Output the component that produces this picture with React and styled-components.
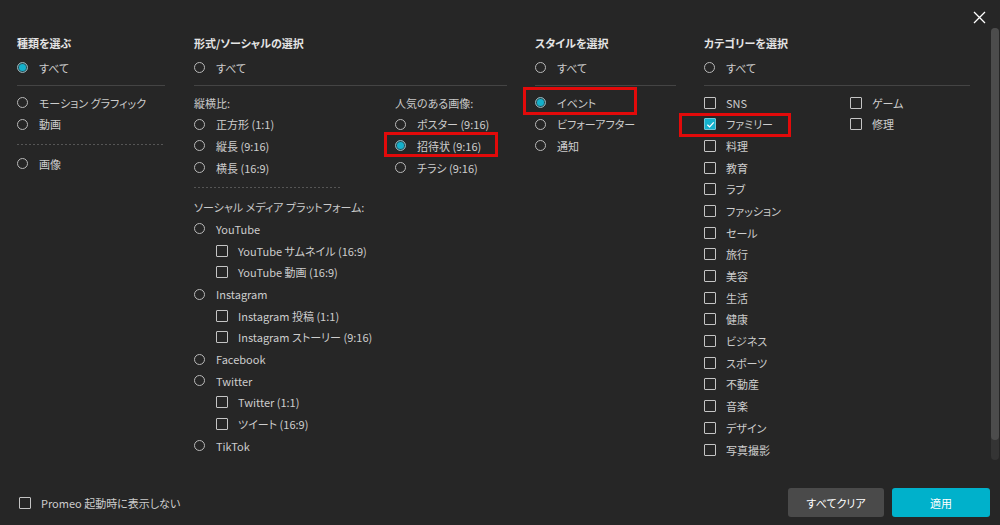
import React from "react"
import styled, { createGlobalStyle, css } from "styled-components"

const GlobalStyle = createGlobalStyle`
  html, body {
    margin: 0;
    padding: 0;
    background: #262626;
  }
  body {
    font-family: "Noto Sans CJK JP", "Noto Sans", sans-serif;
    font-feature-settings: "palt";
  }
`

const CYAN = "#14b1cc"

const mediaRows = [
  { kind: "label", text: "ソーシャル メディア プラットフォーム:" },
  { kind: "radio", text: "YouTube" },
  { kind: "check", text: "YouTube サムネイル (16:9)", indent: true },
  { kind: "check", text: "YouTube 動画 (16:9)", indent: true },
  { kind: "radio", text: "Instagram" },
  { kind: "check", text: "Instagram 投稿 (1:1)", indent: true },
  { kind: "check", text: "Instagram ストーリー (9:16)", indent: true },
  { kind: "radio", text: "Facebook" },
  { kind: "radio", text: "Twitter" },
  { kind: "check", text: "Twitter (1:1)", indent: true },
  { kind: "check", text: "ツイート (16:9)", indent: true },
  { kind: "radio", text: "TikTok" },
]

const categories = [
  "SNS", "ファミリー", "料理", "教育", "ラブ", "ファッション", "セール", "旅行",
  "美容", "生活", "健康", "ビジネス", "スポーツ", "不動産", "音楽", "デザイン", "写真撮影",
]

const Item = ({ kind, text, on, indent, mark }) => (
  <Row $indent={indent} $mark={mark}>
    {kind === "radio" && <Radio $on={on} />}
    {kind === "check" && (
      <Box $on={on}>
        {on && (
          <svg width="9" height="9" viewBox="0 0 10 10">
            <path d="M1.5 5.2 L4 7.6 L8.6 2.6" fill="none" stroke="#fff" strokeWidth="1.4" />
          </svg>
        )}
      </Box>
    )}
    <Label $plain={kind === "label"}>{text}</Label>
  </Row>
)

export default () => (
  <Dialog>
    <GlobalStyle />
    <Close aria-label="close">
      <svg width="13" height="13" viewBox="0 0 13 13">
        <path d="M1 1 L12 12 M12 1 L1 12" stroke="#fff" strokeWidth="1.3" />
      </svg>
    </Close>
    <Track>
      <Thumb />
    </Track>

    <Columns>
      <Column $width={148} $gap={29}>
        <Heading>種類を選ぶ</Heading>
        <Item kind="radio" text="すべて" on />
        <Rule />
        <Item kind="radio" text="モーション グラフィック" />
        <Item kind="radio" text="動画" />
        <Rule $dashed />
        <Item kind="radio" text="画像" />
      </Column>

      <Column $width={313} $gap={28}>
        <Heading>形式/ソーシャルの選択</Heading>
        <Item kind="radio" text="すべて" />
        <Rule />
        <SubCols>
          <SubCol $width={201}>
            <Item kind="label" text="縦横比:" />
            <Item kind="radio" text="正方形 (1:1)" />
            <Item kind="radio" text="縦長 (9:16)" />
            <Item kind="radio" text="横長 (16:9)" />
            <Rule $dashed $width={148} />
            {mediaRows.map((r) => (
              <Item key={r.text} {...r} />
            ))}
          </SubCol>
          <SubCol>
            <Item kind="label" text="人気のある画像:" />
            <Item kind="radio" text="ポスター (9:16)" />
            <Item kind="radio" text="招待状 (9:16)" on mark={{ l: -11, t: -3, w: 114, h: 25 }} />
            <Item kind="radio" text="チラシ (9:16)" />
          </SubCol>
        </SubCols>
      </Column>

      <Column $width={141} $gap={28}>
        <Heading>スタイルを選択</Heading>
        <Item kind="radio" text="すべて" />
        <Rule />
        <Item kind="radio" text="イベント" on mark={{ l: -12, t: -5, w: 114, h: 28 }} />
        <Item kind="radio" text="ビフォーアフター" />
        <Item kind="radio" text="通知" />
      </Column>

      <Column $width={266}>
        <Heading>カテゴリーを選択</Heading>
        <Item kind="radio" text="すべて" />
        <Rule />
        <SubCols>
          <SubCol $width={146}>
            {categories.map((c) => (
              <Item
                key={c}
                kind="check"
                text={c}
                on={c === "ファミリー"}
                mark={c === "ファミリー" ? { l: -25, t: 0, w: 112, h: 24 } : null}
              />
            ))}
          </SubCol>
          <SubCol>
            <Item kind="check" text="ゲーム" />
            <Item kind="check" text="修理" />
          </SubCol>
        </SubCols>
      </Column>
    </Columns>

    <Footer>
      <Startup>
        <Box />
        <Label>Promeo 起動時に表示しない</Label>
      </Startup>
      <Buttons>
        <Button>すべてクリア</Button>
        <Button $primary>適用</Button>
      </Buttons>
    </Footer>
  </Dialog>
)

const Dialog = styled.div`
  position: relative;
  width: 1000px;
  height: 525px;
  background: #262626;
  display: flex;
  flex-direction: column;
  overflow: hidden;
`
const Close = styled.button`
  position: absolute;
  top: 10px;
  right: 13px;
  width: 15px;
  height: 15px;
  padding: 0;
  border: none;
  background: none;
  display: flex;
  align-items: center;
  justify-content: center;
  cursor: pointer;
`
const Track = styled.div`
  position: absolute;
  top: 28px;
  right: 1px;
  width: 8px;
  height: 432px;
  border-radius: 4px;
  background: #343434;
`
const Thumb = styled.div`
  width: 8px;
  height: 412px;
  border-radius: 4px;
  background: #4c4c4c;
`
const Columns = styled.div`
  flex: 1;
  display: flex;
  align-items: flex-start;
  padding: 35px 0 0 17px;
`
const Column = styled.div`
  width: ${(p) => p.$width}px;
  margin-right: ${(p) => p.$gap || 0}px;
  display: flex;
  flex-direction: column;
`
const SubCols = styled.div`
  display: flex;
`
const SubCol = styled.div`
  display: flex;
  flex-direction: column;
  ${(p) => (p.$width ? `width: ${p.$width}px;` : "flex: 1;")}
`
const Heading = styled.h3`
  margin: 0 0 6px;
  font-size: 11px;
  line-height: 16px;
  font-weight: 700;
  color: #e4e4e4;
`
const Row = styled.div`
  position: relative;
  height: 21.7px;
  display: flex;
  align-items: center;
  padding-left: ${(p) => (p.$indent ? 22 : 0)}px;
  ${(p) =>
    p.$mark &&
    css`
      &::after {
        content: "";
        position: absolute;
        left: ${p.$mark.l}px;
        top: ${p.$mark.t}px;
        width: ${p.$mark.w}px;
        height: ${p.$mark.h}px;
        box-sizing: border-box;
        border: 3px solid #e20a0a;
      }
    `}
`
const Radio = styled.span`
  width: 11px;
  height: 11px;
  box-sizing: border-box;
  border-radius: 50%;
  border: 1.3px solid #b9b9b9;
  margin-right: 11px;
  flex-shrink: 0;
  ${(p) =>
    p.$on &&
    css`
      background: ${CYAN};
      border-color: #9aa9ad;
      box-shadow: inset 0 0 0 1px #2b4a50;
    `}
`
const Box = styled.span`
  width: 12px;
  height: 12px;
  box-sizing: border-box;
  border: 1.4px solid #c4c4c4;
  border-radius: 1px;
  margin-right: 10px;
  flex-shrink: 0;
  display: flex;
  align-items: center;
  justify-content: center;
  ${(p) =>
    p.$on &&
    css`
      background: ${CYAN};
      border-color: #6fc6d6;
    `}
`
const Label = styled.span`
  font-size: 11px;
  color: ${(p) => (p.$plain ? "#c9c9c9" : "#cdcdcd")};
  white-space: nowrap;
`
const Rule = styled.div`
  height: 1px;
  width: ${(p) => (p.$width ? `${p.$width}px` : "100%")};
  margin: ${(p) => (p.$dashed ? "9px 0 8px" : "6px 0")};
  background: ${(p) =>
    p.$dashed
      ? "repeating-linear-gradient(90deg, #555 0 2px, transparent 2px 4px)"
      : "#444"};
`
const Footer = styled.div`
  display: flex;
  align-items: center;
  justify-content: space-between;
  padding: 0 10px 8px 19px;
`
const Startup = styled.div`
  display: flex;
  align-items: center;
`
const Buttons = styled.div`
  display: flex;
  gap: 8px;
`
const Button = styled.button`
  height: 29px;
  width: ${(p) => (p.$primary ? 98 : 96)}px;
  border: none;
  border-radius: 3px;
  font-family: inherit;
  font-feature-settings: "palt";
  font-size: 11px;
  color: #fff;
  background: ${(p) => (p.$primary ? "#00b1cb" : "#4a4a4a")};
  cursor: pointer;
`
